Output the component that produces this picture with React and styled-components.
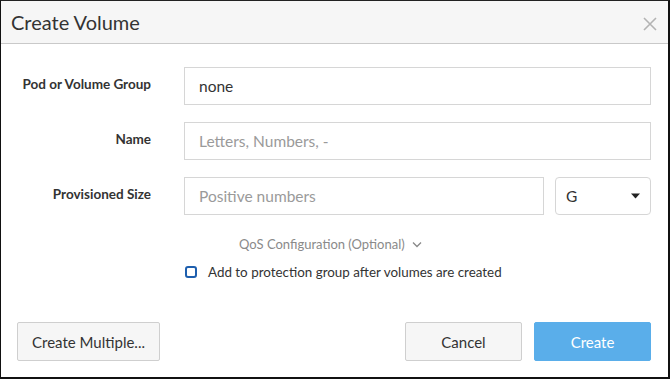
import React from "react";
import styled, { createGlobalStyle } from "styled-components";

const Global = createGlobalStyle`
  html, body { margin: 0; padding: 0; background: #fff; }
  body { font-family: "Lato", "Open Sans", sans-serif; color: #333; }
  * { box-sizing: border-box; }
`;

const Frame = styled.div`
  width: 670px;
  height: 379px;
  border-top: 1px solid #222;
  border-left: 1px solid #111;
  border-right: 2px solid #111;
  border-bottom: 2px solid #111;
  display: flex;
  flex-direction: column;
  background: #fff;
`;

const Header = styled.div`
  height: 43px;
  flex: none;
  background: #f6f6f6;
  border-bottom: 1px solid #c9c9c9;
  display: flex;
  align-items: center;
  justify-content: space-between;
  padding: 0 10px 0 10px;
`;

const Title = styled.h1`
  margin: 0;
  font-size: 20px;
  font-weight: 400;
  color: #333;
`;

const Close = styled.button`
  border: 0;
  background: none;
  padding: 0;
  width: 16px;
  height: 16px;
  margin-top: 3px;
  display: flex;
  cursor: pointer;
`;

const Body = styled.div`
  flex: 1;
  display: flex;
  flex-direction: column;
  padding: 23px 17px 0 16px;
`;

const Row = styled.div`
  display: grid;
  grid-template-columns: 134px 1fr;
  column-gap: 33px;
  align-items: center;
  margin-bottom: 17px;
`;

const Label = styled.label`
  text-align: right;
  font-size: 13.5px;
  font-weight: 700;
  color: #333;
  margin-top: -4px;
`;

const Field = styled.div`
  display: flex;
  gap: 11px;
`;

const Input = styled.input`
  flex: 1;
  min-width: 0;
  height: 38px;
  border: 1px solid #d6d6d6;
  border-radius: 0;
  padding: 0 14px;
  font-family: inherit;
  font-size: 15.5px;
  color: #333;
  outline: none;
  &::placeholder { color: #9a9a9a; }
`;

const Select = styled.div`
  width: 96px;
  height: 38px;
  flex: none;
  border: 1px solid #d6d6d6;
  border-radius: 4px;
  display: flex;
  align-items: center;
  justify-content: space-between;
  padding: 0 10px 0 10px;
  font-size: 15.5px;
  color: #333;
`;

const Qos = styled.div`
  display: flex;
  align-items: center;
  gap: 7px;
  margin: 4px 0 0 222px;
  font-size: 13px;
  color: #8a8a8a;
`;

const CheckRow = styled.label`
  display: flex;
  align-items: center;
  gap: 11px;
  margin: 12px 0 0 168px;
  font-size: 13.4px;
  color: #333;
`;

const Box = styled.span`
  width: 12px;
  height: 12px;
  border: 2px solid #1e5fae;
  border-radius: 3px;
  display: inline-block;
`;

const Footer = styled.div`
  display: flex;
  align-items: center;
  gap: 12px;
  margin-top: 42px;
`;

const Button = styled.button`
  height: 39px;
  width: ${(p) => p.$w}px;
  border-radius: 2px;
  font-family: inherit;
  font-size: 15px;
  cursor: pointer;
  border: 1px solid ${(p) => (p.$primary ? "#5aaeea" : "#cfcfcf")};
  background: ${(p) => (p.$primary ? "#5aaeea" : "#f6f6f6")};
  color: ${(p) => (p.$primary ? "#fff" : "#333")};
`;

const Spacer = styled.div`
  flex: 1;
`;

export default function App() {
  return (
    <>
      <Global />
      <Frame>
        <Header>
          <Title>Create Volume</Title>
          <Close aria-label="Close">
            <svg width="16" height="16" viewBox="0 0 16 16">
              <path d="M2 2L14 14M14 2L2 14" stroke="#b3b3b3" strokeWidth="1.6" />
            </svg>
          </Close>
        </Header>
        <Body>
          <Row>
            <Label>Pod or Volume Group</Label>
            <Field>
              <Input defaultValue="none" />
            </Field>
          </Row>
          <Row>
            <Label>Name</Label>
            <Field>
              <Input placeholder="Letters, Numbers, -" />
            </Field>
          </Row>
          <Row>
            <Label>Provisioned Size</Label>
            <Field>
              <Input placeholder="Positive numbers" />
              <Select>
                <span>G</span>
                <svg width="9" height="6" viewBox="0 0 9 6">
                  <path d="M0 0.5H9L4.5 5.5Z" fill="#222" />
                </svg>
              </Select>
            </Field>
          </Row>
          <Qos>
            QoS Configuration (Optional)
            <svg width="10" height="7" viewBox="0 0 10 7">
              <path d="M1 1.5L5 5.5L9 1.5" stroke="#888" strokeWidth="1.3" fill="none" />
            </svg>
          </Qos>
          <CheckRow>
            <Box />
            Add to protection group after volumes are created
          </CheckRow>
          <Footer>
            <Button $w={143}>Create Multiple...</Button>
            <Spacer />
            <Button $w={117}>Cancel</Button>
            <Button $w={117} $primary>Create</Button>
          </Footer>
        </Body>
      </Frame>
    </>
  );
}
